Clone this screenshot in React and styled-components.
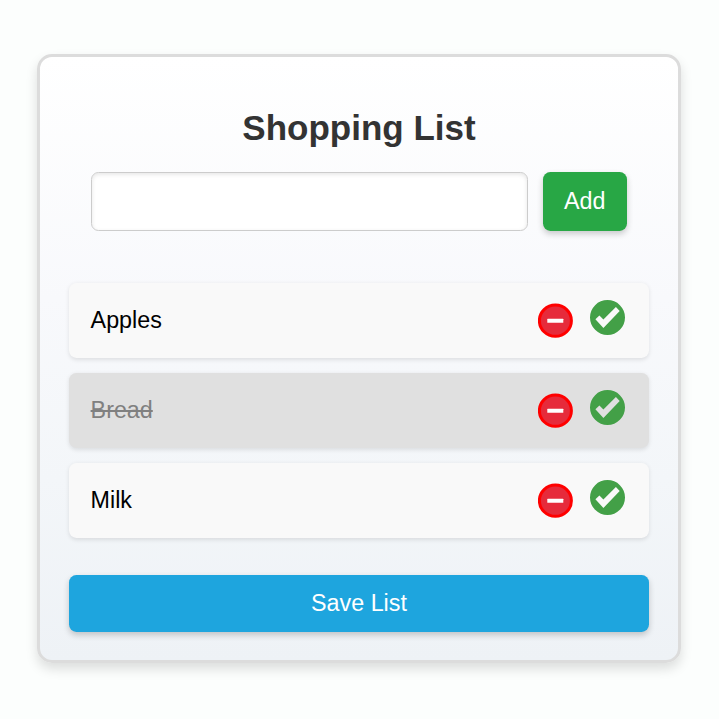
import React, { useState } from "react";
import styled, { createGlobalStyle } from "styled-components";

const GlobalStyle = createGlobalStyle`
  *, *::before, *::after { box-sizing: border-box; }
  body {
    margin: 0;
    background: #fcfefd;
    font-family: "Liberation Sans", Arial, sans-serif;
    font-size: 23.3px;
    color: #000;
  }
`;

const Page = styled.main`
  height: 719px;
  padding: 53.7px 38px 0 37px;
  overflow: hidden;
`;

const Card = styled.section`
  height: 609px;
  padding: 0 29px;
  border: 3px solid #dcdcdc;
  border-radius: 15px;
  background: linear-gradient(to bottom, #ffffff, #f8f9fc 40%, #f3f6f9 70%, #eef2f6);
  box-shadow: 0 6px 12px rgba(0, 0, 0, 0.13);
`;

const Title = styled.h1`
  margin: 0;
  padding-top: 51.6px;
  height: 115.7px;
  font-size: 35px;
  line-height: 40px;
  text-align: center;
  color: #333;
`;

const AddForm = styled.form`
  display: flex;
  gap: 14.5px;
  height: 58.5px;
  margin: 0 22px;
`;

const ItemInput = styled.input`
  flex: 1;
  min-width: 0;
  padding: 0 14px;
  border: 1px solid #ccc;
  border-radius: 7.4px;
  background: #fff;
  font: inherit;
  box-shadow: inset 0 1.5px 4.4px rgba(0, 0, 0, 0.1);
`;

const Button = styled.button`
  display: block;
  padding: 0;
  border: 0;
  border-radius: 7.4px;
  font: inherit;
  color: #fff;
  box-shadow: 0 3px 6px rgba(0, 0, 0, 0.2);
`;

const AddButton = styled(Button)`
  width: 84.5px;
  background: #28a745;
`;

const SaveButton = styled(Button)`
  width: 100%;
  height: 56.2px;
  margin-top: 37.4px;
  background: #1ea5de;
`;

const Items = styled.ul`
  display: grid;
  gap: 14.7px;
  margin: 51.8px 0 0;
  padding: 0;
  list-style: none;
`;

const Item = styled.li`
  display: flex;
  align-items: center;
  height: 75.3px;
  padding: 0 24px 0 21.6px;
  border-radius: 7.4px;
  background: ${({ $done }) => ($done ? "#e0e0e0" : "#f9f9f9")};
  box-shadow: 0 1.5px 4.4px rgba(0, 0, 0, 0.1);
`;

const ItemName = styled.span`
  flex: 1;
  color: ${({ $done }) => ($done ? "#808080" : "#000")};
  text-decoration: ${({ $done }) => ($done ? "line-through" : "none")};
`;

const IconButton = styled.button`
  display: block;
  width: 35px;
  height: 35px;
  padding: 0;
  border: 0;
  background: none;
`;

const RemoveButton = styled(IconButton)`
  margin: 1px 17.3px 0 0;
`;

const CheckButton = styled(IconButton)`
  margin-bottom: 5px;
`;

const Icon = styled.svg`
  display: block;
  width: 35px;
  height: 35px;
`;

const RemoveIcon = () => (
  <Icon viewBox="0 0 35 35">
    <ellipse cx="17.4" cy="17.7" rx="16" ry="15.6" fill="#e62b3b" stroke="#ff0000" strokeWidth="3" />
    <rect x="9.3" y="15.8" width="16" height="4" rx="0.4" fill="#fff" />
  </Icon>
);

const CheckIcon = () => (
  <Icon viewBox="0 0 35 35">
    <path
      fillRule="evenodd"
      fill="#43a047"
      d="M17.5 0a17.5 17.5 0 1 0 0 35a17.5 17.5 0 0 0 0-35z M25.9 6.9L13.4 19.5L9.4 15.4L5.4 19.3L13.4 27.9L29.7 11z"
    />
  </Icon>
);

const initialItems = [
  { name: "Apples", done: false },
  { name: "Bread", done: true },
  { name: "Milk", done: false },
];

export default function App() {
  const [items, setItems] = useState(initialItems);
  const [draft, setDraft] = useState("");

  const add = (event) => {
    event.preventDefault();
    if (!draft.trim()) return;
    setItems([...items, { name: draft.trim(), done: false }]);
    setDraft("");
  };
  const remove = (index) => setItems(items.filter((_, i) => i !== index));
  const toggle = (index) =>
    setItems(items.map((item, i) => (i === index ? { ...item, done: !item.done } : item)));

  return (
    <>
      <GlobalStyle />
      <Page>
        <Card>
          <Title>Shopping List</Title>
          <AddForm onSubmit={add}>
            <ItemInput
              aria-label="New item"
              value={draft}
              onChange={(event) => setDraft(event.target.value)}
            />
            <AddButton type="submit">Add</AddButton>
          </AddForm>
          <Items>
            {items.map((item, index) => (
              <Item key={item.name} $done={item.done}>
                <ItemName $done={item.done}>{item.name}</ItemName>
                <RemoveButton aria-label="Remove" onClick={() => remove(index)}>
                  <RemoveIcon />
                </RemoveButton>
                <CheckButton aria-label="Toggle" onClick={() => toggle(index)}>
                  <CheckIcon />
                </CheckButton>
              </Item>
            ))}
          </Items>
          <SaveButton type="button">Save List</SaveButton>
        </Card>
      </Page>
    </>
  );
}
